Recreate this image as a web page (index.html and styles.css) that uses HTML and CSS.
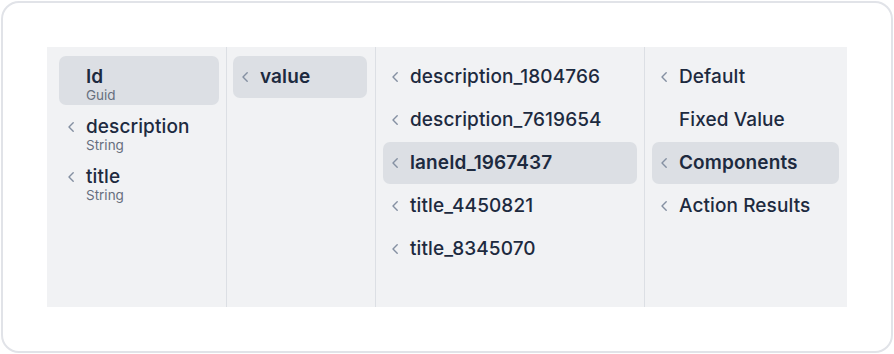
FILE: index.html
```html
<!DOCTYPE html>
<html lang="en">
<head>
    <meta charset="UTF-8">
    <meta name="viewport" content="width=device-width, initial-scale=1.0">
    <title>Field Picker</title>
    <link rel="stylesheet" href="styles.css">
</head>
<body>
    <div class="card">
        <div class="picker">
            <div class="column col-fields">
                <div class="item item-tall selected">
                    <span class="chev"></span>
                    <div class="label">
                        <div class="name">Id</div>
                        <div class="type">Guid</div>
                    </div>
                </div>
                <div class="item item-tall">
                    <span class="chev"><svg width="6" height="10" viewBox="0 0 6 10"><path d="M5.2 0.8 L1 5 L5.2 9.2" /></svg></span>
                    <div class="label">
                        <div class="name">description</div>
                        <div class="type">String</div>
                    </div>
                </div>
                <div class="item item-tall">
                    <span class="chev"><svg width="6" height="10" viewBox="0 0 6 10"><path d="M5.2 0.8 L1 5 L5.2 9.2" /></svg></span>
                    <div class="label">
                        <div class="name">title</div>
                        <div class="type">String</div>
                    </div>
                </div>
            </div>

            <div class="column col-props">
                <div class="item selected">
                    <span class="chev"><svg width="6" height="10" viewBox="0 0 6 10"><path d="M5.2 0.8 L1 5 L5.2 9.2" /></svg></span>
                    <div class="name">value</div>
                </div>
            </div>

            <div class="column col-keys">
                <div class="item">
                    <span class="chev"><svg width="6" height="10" viewBox="0 0 6 10"><path d="M5.2 0.8 L1 5 L5.2 9.2" /></svg></span>
                    <div class="name">description_1804766</div>
                </div>
                <div class="item">
                    <span class="chev"><svg width="6" height="10" viewBox="0 0 6 10"><path d="M5.2 0.8 L1 5 L5.2 9.2" /></svg></span>
                    <div class="name">description_7619654</div>
                </div>
                <div class="item selected">
                    <span class="chev"><svg width="6" height="10" viewBox="0 0 6 10"><path d="M5.2 0.8 L1 5 L5.2 9.2" /></svg></span>
                    <div class="name">laneId_1967437</div>
                </div>
                <div class="item">
                    <span class="chev"><svg width="6" height="10" viewBox="0 0 6 10"><path d="M5.2 0.8 L1 5 L5.2 9.2" /></svg></span>
                    <div class="name">title_4450821</div>
                </div>
                <div class="item">
                    <span class="chev"><svg width="6" height="10" viewBox="0 0 6 10"><path d="M5.2 0.8 L1 5 L5.2 9.2" /></svg></span>
                    <div class="name">title_8345070</div>
                </div>
            </div>

            <div class="column col-sources">
                <div class="item">
                    <span class="chev"><svg width="6" height="10" viewBox="0 0 6 10"><path d="M5.2 0.8 L1 5 L5.2 9.2" /></svg></span>
                    <div class="name">Default</div>
                </div>
                <div class="item">
                    <span class="chev"></span>
                    <div class="name">Fixed Value</div>
                </div>
                <div class="item selected">
                    <span class="chev"><svg width="6" height="10" viewBox="0 0 6 10"><path d="M5.2 0.8 L1 5 L5.2 9.2" /></svg></span>
                    <div class="name">Components</div>
                </div>
                <div class="item">
                    <span class="chev"><svg width="6" height="10" viewBox="0 0 6 10"><path d="M5.2 0.8 L1 5 L5.2 9.2" /></svg></span>
                    <div class="name">Action Results</div>
                </div>
            </div>
        </div>
    </div>
</body>
</html>
```

FILE: styles.css
```css
* {
    box-sizing: border-box;
}

body {
    font-family: 'Inter', 'Noto Sans', sans-serif;
    background: #ffffff;
    color: #1d2a3f;
    margin: 0;
    padding: 1px;
}

.card {
    width: 892px;
    height: 352px;
    border: 2px solid #e1e3e8;
    border-radius: 18px;
    padding: 44px;
    background: #ffffff;
}

.picker {
    display: flex;
    height: 260px;
    background: #f1f2f4;
}

.column {
    display: flex;
    flex-direction: column;
    gap: 1px;
    padding: 9px 7px;
    border-right: 1px solid #dcdfe4;
}

.column:last-child {
    border-right: none;
}

.col-fields {
    width: 180px;
    padding-left: 12px;
}

.col-props {
    width: 149px;
    padding-left: 6px;
    padding-right: 8px;
}

.col-keys {
    width: 269px;
}

.col-sources {
    width: 202px;
    padding-right: 8px;
}

.item {
    display: flex;
    align-items: center;
    height: 42px;
    padding-left: 9px;
    border-radius: 7px;
}

.item-tall {
    height: 49px;
    align-items: flex-start;
    padding-top: 10px;
}

.item.selected {
    background: #dcdfe4;
}

.chev {
    width: 18px;
    height: 10px;
    flex-shrink: 0;
    display: flex;
}

.item-tall .chev {
    height: 22px;
    align-items: center;
}

.chev svg path {
    fill: none;
    stroke: #8590a2;
    stroke-width: 1.4;
    stroke-linecap: round;
    stroke-linejoin: round;
}

.name {
    font-size: 19px;
    font-weight: 500;
    line-height: 22px;
    letter-spacing: 0.1px;
    color: #1d2a3f;
}

.selected .name {
    font-weight: 600;
}

.type {
    font-size: 13.5px;
    line-height: 15px;
    color: #676f7e;
}
```
